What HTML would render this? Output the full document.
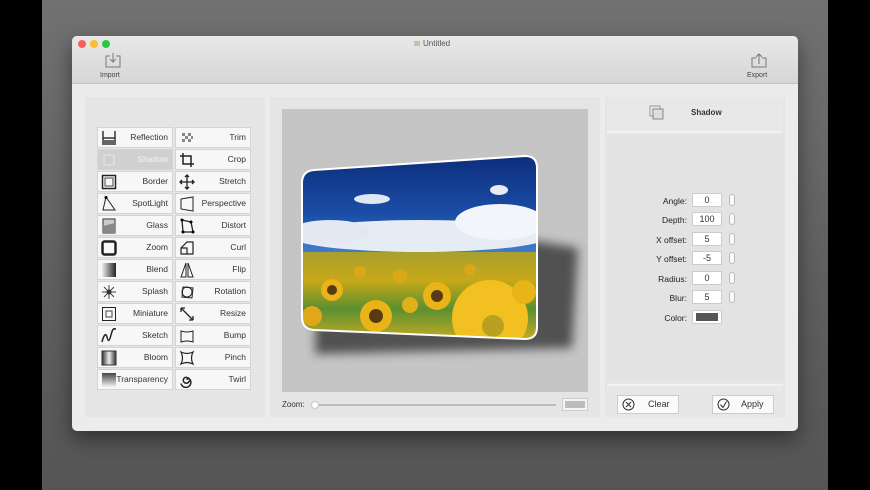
<!DOCTYPE html>
<html><head><meta charset="utf-8"><style>
*{margin:0;padding:0;box-sizing:border-box}
body{width:870px;height:490px;overflow:hidden;background:#000;font-family:"Liberation Sans",sans-serif;position:relative}
.a{position:absolute}
.bg{left:42px;top:0;width:786px;height:490px;background:linear-gradient(#717171,#5e5e5e 60%,#555)}
.win{left:72px;top:36px;width:726px;height:395px;background:#ececec;border-radius:5px;overflow:hidden;box-shadow:0 8px 20px rgba(0,0,0,.45)}
.tb{left:0;top:0;width:726px;height:48px;background:linear-gradient(#e8e8e8,#d6d6d6);border-bottom:1px solid #c4c4c4}
.dot{width:8px;height:8px;border-radius:50%;top:4px}
.lbl{font-size:7px;color:#444}
.panel{background:#e5e5e5}
.btn{width:76px;height:21px;background:#f7f7f7;border:1px solid #d4d4d4;font-size:8.5px;color:#333;text-align:right;padding-right:4px;line-height:19px;white-space:nowrap}
.btn svg{position:absolute;left:3px;top:2px}
.fl{font-size:8.5px;color:#222;text-align:right;width:60px}
.fi{width:30px;height:14px;background:#fff;border:1px solid #ccc;font-size:9px;text-align:center;line-height:12px;color:#333}
.st{width:6px;height:12px;border:1px solid #bbb;border-radius:3px;background:#fafafa}
.pb{height:19px;background:#fafafa;border:1px solid #ccc;font-size:9px;color:#333;line-height:17px}
</style></head><body>
<div class="a bg"></div>
<div class="a win">
 <div class="a tb">
  <div class="a dot" style="left:6px;background:#fe5f57"></div>
  <div class="a dot" style="left:18px;background:#febc2e"></div>
  <div class="a dot" style="left:30px;background:#28c840"></div>
  <div class="a" style="left:342px;top:3px;font-size:8px;color:#555"><span style="display:inline-block;width:6px;height:5px;background:#b9c9a8;margin-right:3px"></span>Untitled</div>
  <svg class="a" style="left:33px;top:17px" width="16" height="15" viewBox="0 0 16 15"><path d="M5 3H1v11h14V3h-4M8 0v9M5 6l3 3 3-3" fill="none" stroke="#777" stroke-width="1"/></svg>
  <div class="a lbl" style="left:28px;top:36px">Import</div>
  <svg class="a" style="left:679px;top:17px" width="16" height="15" viewBox="0 0 16 15"><path d="M5 5H1v9h14V5h-4M8 11V1M5 4l3-3 3 3" fill="none" stroke="#777" stroke-width="1"/></svg>
  <div class="a lbl" style="left:675px;top:36px">Export</div>
 </div>
 <div class="a panel" style="left:13px;top:61px;width:180px;height:320px"></div>
 <div class="a panel" style="left:198px;top:61px;width:330px;height:320px"></div>
 <div class="a" style="left:210px;top:73px;width:306px;height:283px;background:#c5c5c5"></div>
 <div class="a" style="left:210px;top:364px;font-size:8px;color:#333">Zoom:</div>
 <div class="a" style="left:246px;top:368px;width:238px;height:2px;background:#bbb"></div>
 <div class="a" style="left:239px;top:365px;width:8px;height:8px;border-radius:50%;background:#fff;border:1px solid #ccc"></div>
 <div class="a" style="left:490px;top:362px;width:26px;height:13px;border:1px solid #ccc;background:#f4f4f4"><div style="margin:2px;height:7px;background:#bcbcbc"></div></div>
 <div class="a panel" style="left:533px;top:61px;width:180px;height:320px"></div>
 <div class="a" style="left:535px;top:61px;width:176px;height:36px;background:#e8e8e8;border-bottom:2px solid #f2f2f2"></div>
 <svg class="a" style="left:577px;top:69px" width="16" height="16" viewBox="0 0 16 16"><rect x="1" y="1" width="10" height="10" fill="none" stroke="#999"/><rect x="4" y="4" width="10" height="10" fill="#ddd" stroke="#888"/></svg>
 <div class="a" style="left:619px;top:72px;font-size:8px;font-weight:bold;color:#333">Shadow</div>
 <div class="a" style="left:535px;top:99px;width:176px;height:245px;background:#e3e3e3"></div>
 <div class="a" style="left:535px;top:348px;width:176px;height:33px;background:#e7e7e7;border-top:2px solid #f2f2f2"></div>
 <div class="a pb" style="left:545px;top:359px;width:62px"><svg style="position:absolute;left:4px;top:2px" width="13" height="13"><circle cx="6.5" cy="6.5" r="5.5" fill="none" stroke="#333"/><path d="M4 4l5 5M9 4l-5 5" stroke="#333"/></svg><span style="margin-left:30px">Clear</span></div>
 <div class="a pb" style="left:640px;top:359px;width:62px"><svg style="position:absolute;left:4px;top:2px" width="13" height="13"><circle cx="6.5" cy="6.5" r="5.5" fill="none" stroke="#333"/><path d="M3.5 6.5l2.5 3 3.5-6" fill="none" stroke="#333"/></svg><span style="margin-left:28px">Apply</span></div>
</div>

<div class="a fl" style="left:627px;top:196px">Angle:</div><div class="a fi" style="left:692px;top:193px">0</div><div class="a st" style="left:729px;top:194px"></div>
<div class="a fl" style="left:627px;top:215px">Depth:</div><div class="a fi" style="left:692px;top:212px">100</div><div class="a st" style="left:729px;top:213px"></div>
<div class="a fl" style="left:627px;top:235px">X offset:</div><div class="a fi" style="left:692px;top:232px">5</div><div class="a st" style="left:729px;top:233px"></div>
<div class="a fl" style="left:627px;top:254px">Y offset:</div><div class="a fi" style="left:692px;top:251px">-5</div><div class="a st" style="left:729px;top:252px"></div>
<div class="a fl" style="left:627px;top:274px">Radius:</div><div class="a fi" style="left:692px;top:271px">0</div><div class="a st" style="left:729px;top:272px"></div>
<div class="a fl" style="left:627px;top:293px">Blur:</div><div class="a fi" style="left:692px;top:290px">5</div><div class="a st" style="left:729px;top:291px"></div>
<div class="a fl" style="left:627px;top:313px">Color:</div><div class="a fi" style="left:692px;top:310px;padding:2px 3px"><div style="height:8px;background:#555"></div></div>

<div class="a btn" style="left:97px;top:127px"><svg width="16" height="16"><path d="M2 1v14M14 1v14M2 8h12" stroke="#333" stroke-width="1.5"/><rect x="2" y="10" width="12" height="5" fill="#666"/></svg>Reflection</div>
<div class="a btn" style="left:175px;top:127px"><svg width="16" height="16"><path d="M3 3h3v3H3zM9 3h3v3H9zM6 6h3v3H6zM3 9h3v3H3zM9 9h3v3H9zM12 6h2v3h-2z" fill="#888"/></svg>Trim</div>
<div class="a btn" style="left:97px;top:149px;background:#d0d0d0;color:#f4f4f4"><svg width="16" height="16"><rect x="3" y="3" width="10" height="10" fill="none" stroke="#e6e6e6"/></svg>Shadow</div>
<div class="a btn" style="left:175px;top:149px"><svg width="16" height="16"><path d="M4 1v11h11M1 4h11v11" fill="none" stroke="#222" stroke-width="1.5"/></svg>Crop</div>
<div class="a btn" style="left:97px;top:171px"><svg width="16" height="16"><rect x="1.5" y="1.5" width="13" height="13" fill="none" stroke="#222" stroke-width="1.5"/><rect x="4" y="4" width="8" height="8" fill="none" stroke="#444"/></svg>Border</div>
<div class="a btn" style="left:175px;top:171px"><svg width="16" height="16"><path d="M8 1v14M1 8h14M6 3l2-2 2 2M6 13l2 2 2-2M3 6L1 8l2 2M13 6l2 2-2 2" fill="none" stroke="#222" stroke-width="1.3"/></svg>Stretch</div>
<div class="a btn" style="left:97px;top:193px"><svg width="16" height="16"><path d="M5 1L2 14h12z" fill="none" stroke="#222"/><circle cx="5" cy="1.5" r="1.5"/></svg>SpotLight</div>
<div class="a btn" style="left:175px;top:193px"><svg width="16" height="16"><path d="M2 3l12-2v14L2 13z" fill="none" stroke="#222"/></svg>Perspective</div>
<div class="a btn" style="left:97px;top:215px"><svg width="16" height="16"><rect x="2" y="1" width="12" height="14" fill="#ccc" stroke="#333"/><path d="M2 8l12-3v10H2z" fill="#888"/></svg>Glass</div>
<div class="a btn" style="left:175px;top:215px"><svg width="16" height="16"><path d="M3 2l9 2 2 10H4z" fill="none" stroke="#222" stroke-width="1.3"/><circle cx="3" cy="2" r="1.5"/><circle cx="12" cy="4" r="1.5"/><circle cx="14" cy="14" r="1.5"/><circle cx="4" cy="14" r="1.5"/></svg>Distort</div>
<div class="a btn" style="left:97px;top:237px"><svg width="16" height="16"><rect x="1.5" y="1.5" width="13" height="13" rx="2" fill="none" stroke="#222" stroke-width="2.5"/></svg>Zoom</div>
<div class="a btn" style="left:175px;top:237px"><svg width="16" height="16"><path d="M2 14h12V2H8L2 8zM2 8h6v6" fill="none" stroke="#222" stroke-width="1.2"/></svg>Curl</div>
<div class="a btn" style="left:97px;top:259px"><svg width="16" height="16"><defs><linearGradient id="g1"><stop offset="0" stop-color="#eee"/><stop offset="1" stop-color="#222"/></linearGradient></defs><rect x="1" y="1" width="14" height="14" fill="url(#g1)"/></svg>Blend</div>
<div class="a btn" style="left:175px;top:259px"><svg width="16" height="16"><path d="M7 1L2 15h5zM9 1l5 14H9z" fill="none" stroke="#222"/></svg>Flip</div>
<div class="a btn" style="left:97px;top:281px"><svg width="16" height="16"><path d="M8 1v14M1 8h14M3 3l10 10M13 3L3 13" stroke="#444"/><circle cx="8" cy="8" r="2.5" fill="#333"/></svg>Splash</div>
<div class="a btn" style="left:175px;top:281px"><svg width="16" height="16"><path d="M4 3l10 1-1 10-10-1z" fill="none" stroke="#222"/><circle cx="8" cy="8" r="5" fill="none" stroke="#222"/></svg>Rotation</div>
<div class="a btn" style="left:97px;top:303px"><svg width="16" height="16"><rect x="1.5" y="1.5" width="13" height="13" fill="none" stroke="#222"/><rect x="5" y="5" width="6" height="6" fill="none" stroke="#444"/></svg>Miniature</div>
<div class="a btn" style="left:175px;top:303px"><svg width="16" height="16"><path d="M2 2l12 12M2 2h4M2 2v4M14 14h-4M14 14v-4" fill="none" stroke="#222" stroke-width="1.3"/></svg>Resize</div>
<div class="a btn" style="left:97px;top:325px"><svg width="16" height="16"><path d="M1 14C3 6 5 5 6 9s2 6 4-2 3-6 5-6" fill="none" stroke="#222" stroke-width="1.5"/></svg>Sketch</div>
<div class="a btn" style="left:175px;top:325px"><svg width="16" height="16"><path d="M2 3q6 2 12 0v11q-6-2-12 0z" fill="none" stroke="#222"/></svg>Bump</div>
<div class="a btn" style="left:97px;top:347px"><svg width="16" height="16"><defs><linearGradient id="g2"><stop offset="0" stop-color="#333"/><stop offset=".5" stop-color="#eee"/><stop offset="1" stop-color="#333"/></linearGradient></defs><rect x="1" y="1" width="14" height="14" fill="url(#g2)" stroke="#333"/></svg>Bloom</div>
<div class="a btn" style="left:175px;top:347px"><svg width="16" height="16"><path d="M2 2q6 3 12 0-3 6 0 12-6-3-12 0 3-6 0-12z" fill="none" stroke="#222" stroke-width="1.2"/></svg>Pinch</div>
<div class="a btn" style="left:97px;top:369px"><svg width="16" height="16"><defs><linearGradient id="g3" x2="0" y2="1"><stop offset="0" stop-color="#444"/><stop offset="1" stop-color="#f4f4f4"/></linearGradient></defs><rect x="1" y="1" width="14" height="14" fill="url(#g3)"/></svg>Transparency</div>
<div class="a btn" style="left:175px;top:369px"><svg width="16" height="16"><path d="M8 8a1.5 1.5 0 1 1 2 1.5 3 3 0 1 1-4-4 5 5 0 1 1-4 6" fill="none" stroke="#222" stroke-width="1.5"/></svg>Twirl</div>

<svg class="a" style="left:282px;top:109px" width="306" height="283" viewBox="282 109 306 283">
 <defs>
  <filter id="bl"><feGaussianBlur stdDeviation="5"/></filter>
  <clipPath id="cp"><path d="M314 170L525 156Q537 156 537 168V327Q537 339 525 339L314 330Q302 329 302 317V183Q302 171 314 170Z"/></clipPath>
  <linearGradient id="sky" x2="0" y2="1"><stop offset="0" stop-color="#0b2a78"/><stop offset=".6" stop-color="#1c4fa8"/><stop offset="1" stop-color="#4a86d0"/></linearGradient>
  <linearGradient id="fld" x2="0" y2="1"><stop offset="0" stop-color="#a8a030"/><stop offset=".3" stop-color="#c8a818"/><stop offset=".6" stop-color="#5a9030"/><stop offset="1" stop-color="#e0b020"/></linearGradient>
 </defs>
 <path d="M320 205L578 248L572 348L315 354Z" fill="#444" filter="url(#bl)" opacity=".9"/>
 <g clip-path="url(#cp)">
  <rect x="300" y="150" width="240" height="110" fill="url(#sky)"/>
  <ellipse cx="420" cy="236" rx="130" ry="16" fill="#e6ecf4"/>
  <ellipse cx="500" cy="222" rx="45" ry="18" fill="#f2f5fa"/>
  <ellipse cx="330" cy="232" rx="40" ry="12" fill="#e2e9f3"/>
  <ellipse cx="372" cy="199" rx="18" ry="5" fill="#dfe7f3"/>
  <ellipse cx="499" cy="190" rx="9" ry="5" fill="#e6ecf6"/>
  <rect x="300" y="252" width="240" height="95" fill="url(#fld)"/>
  <circle cx="490" cy="318" r="38" fill="#f2c020"/>
  <circle cx="493" cy="326" r="11" fill="#b8a020"/>
  <circle cx="376" cy="316" r="16" fill="#e8b418"/><circle cx="376" cy="316" r="7" fill="#5a3a10"/>
  <circle cx="437" cy="296" r="14" fill="#e8b418"/><circle cx="437" cy="296" r="6" fill="#5a3a10"/>
  <circle cx="332" cy="290" r="11" fill="#e8b418"/><circle cx="332" cy="290" r="5" fill="#5a3a10"/>
  <circle cx="312" cy="316" r="10" fill="#e0a818"/>
  <circle cx="524" cy="292" r="12" fill="#e8b418"/>
  <circle cx="360" cy="272" r="6" fill="#d8a818"/><circle cx="400" cy="276" r="7" fill="#d8a818"/><circle cx="470" cy="270" r="6" fill="#d8a818"/><circle cx="410" cy="305" r="8" fill="#e0b018"/>
 </g>
 <path d="M314 170L525 156Q537 156 537 168V327Q537 339 525 339L314 330Q302 329 302 317V183Q302 171 314 170Z" fill="none" stroke="#fff" stroke-width="2"/>
</svg>
</body></html>
